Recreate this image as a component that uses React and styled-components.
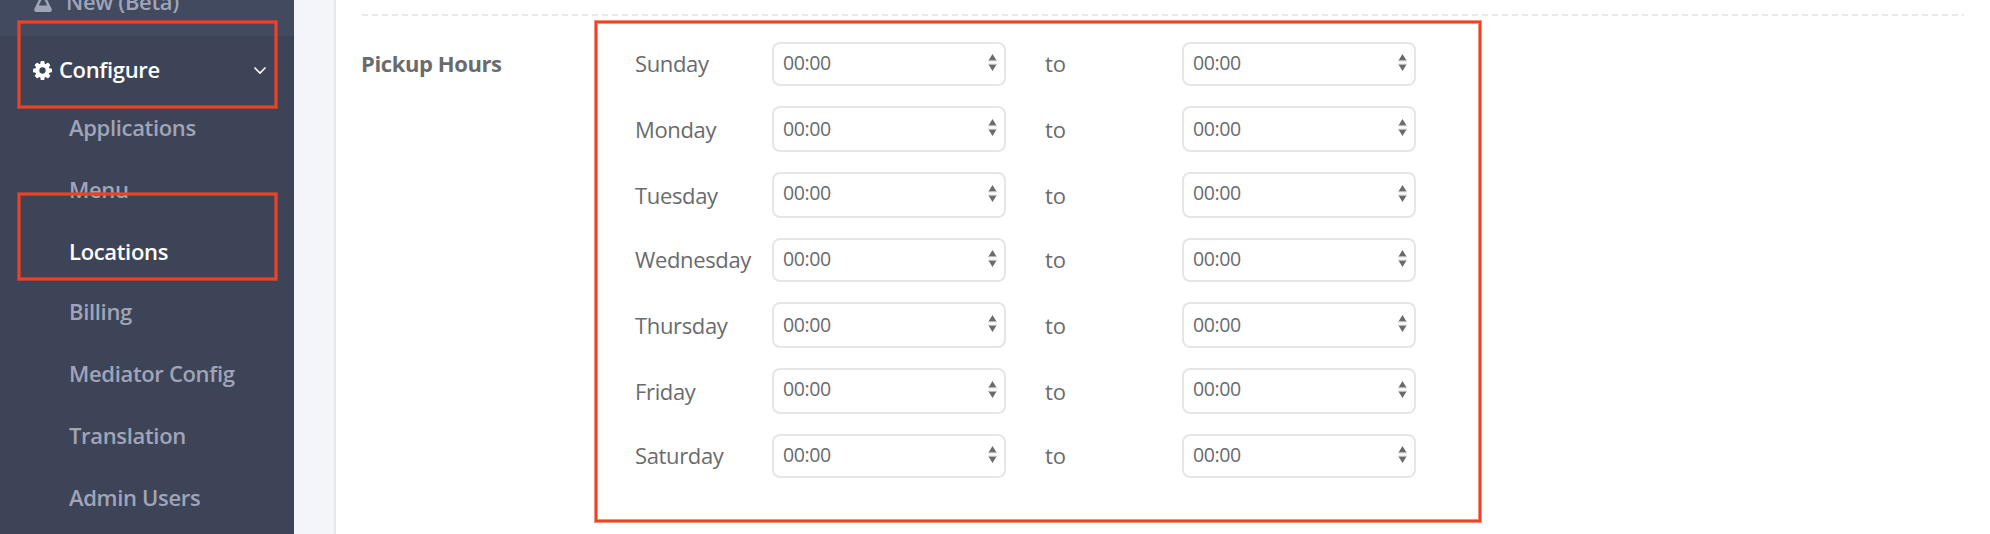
import styled, { createGlobalStyle } from "styled-components";

const subItems = [
  { label: "Applications", height: 62 },
  { label: "Menu", height: 62 },
  { label: "Locations", height: 60, active: true },
  { label: "Billing", height: 62 },
  { label: "Mediator Config", height: 62 },
  { label: "Translation", height: 62 },
  { label: "Admin Users", height: 62 },
];

const days = [
  { name: "Sunday", height: 44, textTop: 0, arrowTop: 0 },
  { name: "Monday", height: 46, textTop: 2, arrowTop: 1 },
  { name: "Tuesday", height: 46, textTop: 0, arrowTop: 1 },
  { name: "Wednesday", height: 44, textTop: 0, arrowTop: 0 },
  { name: "Thursday", height: 46, textTop: 2, arrowTop: 1 },
  { name: "Friday", height: 46, textTop: 0, arrowTop: 1 },
  { name: "Saturday", height: 44, textTop: 0, arrowTop: 0 },
];

function FlaskIcon() {
  return (
    <svg width="18" height="22" viewBox="0 0 18 22">
      <path
        fillRule="evenodd"
        fill="currentColor"
        d="M4.500 0h9v2h-1v6.500L17.500 18.500Q18.600 22 16 22H2Q-.6 22 .5 18.500L5.500 8.500V2h-1zM7.700 2v7.500L4.800 15.500h8.400L10.300 9.500V2z"
      />
    </svg>
  );
}

function CogIcon() {
  return (
    <svg width="19" height="19" viewBox="0 128 1536 1536">
      <path
        fill="currentColor"
        fillRule="evenodd"
        d="M1024 896a256 256 0 1 0-512 0a256 256 0 1 0 512 0zM1536 787v222q0 12-8 23t-20 13l-185 28q-19 54-39 91 35 50 107 138 10 12 10 25t-9 23q-27 37-99 108t-94 71q-12 0-26-9l-138-108q-44 23-91 38-16 136-29 186-7 28-36 28h-222q-14 0-24.500-8.500t-11.500-21.500l-28-184q-49-16-90-37l-141 107q-10 9-25 9-14 0-25-11-126-114-165-168-7-10-7-23 0-12 8-23 15-21 51-66.500t54-70.500q-27-50-41-99l-183-27q-13-2-21-12.500t-8-23.500v-222q0-12 8-23t19-13l186-28q14-46 39-92-40-57-107-138-10-12-10-24 0-10 9-23 26-36 98.500-107.500t94.500-71.500q13 0 26 10l138 107q44-23 91-38 16-136 29-186 7-28 36-28h222q14 0 24.500 8.500t11.500 21.500l28 184q49 16 90 37l142-107q9-9 24-9 13 0 25 10 129 119 165 170 7 8 7 22 0 12-8 23-15 21-51 66.500t-54 70.500q26 50 41 98l183 28q13 2 21 12.500t8 23.500z"
      />
    </svg>
  );
}

function TimeSelect({ day }) {
  return (
    <Select $height={day.height}>
      <Time $top={day.textTop}>00:00</Time>
      <Arrows $top={day.arrowTop} width="9" height="18" viewBox="0 0 9 18">
        <path fill="#696b6d" d="M4.500 0L8.500 6.500H.5zM.5 10.500h8L4.500 17z" />
        <path fill="#bdbebf" d="M0 6.500h9v.7H0zM0 9.800h9v.7H0z" />
      </Arrows>
    </Select>
  );
}

export default function App() {
  return (
    <>
      <GlobalStyle />
      <Page>
        <Sidebar>
          <TopItem>
            <FlaskIcon />
            <span>New (Beta)</span>
          </TopItem>
          <OpenGroup>
            <GroupHeader>
              <CogIcon />
              <GroupName>Configure</GroupName>
              <svg width="14" height="9" viewBox="0 0 14 9">
                <path d="M1.500 1.500L7 7l5.500-5.500" fill="none" stroke="#fff" strokeWidth="1.600" />
              </svg>
            </GroupHeader>
            {subItems.map((item) => (
              <SubItem key={item.label} $height={item.height} $active={item.active}>
                {item.label}
              </SubItem>
            ))}
          </OpenGroup>
        </Sidebar>
        <Content>
          <Divider />
          <FormRow>
            <FieldName>Pickup Hours</FieldName>
            <Days>
              {days.map((day) => (
                <DayRow key={day.name}>
                  <DayName>{day.name}</DayName>
                  <TimeSelect day={day} />
                  <To>to</To>
                  <TimeSelect day={day} />
                </DayRow>
              ))}
            </Days>
          </FormRow>
        </Content>
        <Highlight $left={17} $top={20} $width={261} $height={89} />
        <Highlight $left={17} $top={192} $width={261} $height={89} />
        <Highlight $left={594} $top={20} $width={888} $height={503} />
      </Page>
    </>
  );
}

const GlobalStyle = createGlobalStyle`
  * {
    box-sizing: border-box;
  }

  body {
    margin: 0;
    font-family: "Open Sans", sans-serif;
    -webkit-font-smoothing: antialiased;
  }
`;

const Page = styled.div`
  position: relative;
  display: flex;
  width: 1990px;
  height: 534px;
  overflow: hidden;
  background: #f4f5fa;
`;

const Sidebar = styled.nav`
  flex: none;
  width: 294px;
  background: #414a5e;
  color: #a0a4b8;
  font-size: 22px;
  font-weight: 600;
  letter-spacing: -0.33px;
`;

const TopItem = styled.div`
  display: flex;
  align-items: flex-end;
  gap: 14px;
  height: 36px;
  padding: 0 0 24px 34px;
  line-height: 30px;

  span {
    margin-bottom: -4px;
  }
`;

const OpenGroup = styled.div`
  height: 498px;
  background: #3d4457;
`;

const GroupHeader = styled.div`
  display: flex;
  align-items: center;
  height: 60px;
  padding: 6px 27px 0 33px;
  color: #fff;

  svg {
    margin-top: 3px;
  }
`;

const GroupName = styled.span`
  flex: 1;
  padding-left: 7px;
  line-height: 30px;
`;

const SubItem = styled.div`
  height: ${({ $height }) => $height}px;
  padding-left: 69px;
  color: ${({ $active }) => ($active ? "#fff" : "inherit")};
  line-height: 62px;
`;

const Content = styled.main`
  flex: 1;
  margin-left: 40px;
  padding: 14px 26px 0;
  border-left: 2px solid #e7e8ea;
  background: #fff;
  color: #696b6d;
`;

const Divider = styled.div`
  height: 2px;
  background: repeating-linear-gradient(90deg, #e9e9e9 0 6px, transparent 6px 10px);
`;

const FormRow = styled.div`
  display: flex;
  padding-top: 26px;
`;

const FieldName = styled.div`
  width: 274px;
  margin-left: -1px;
  padding-top: 6px;
  font-size: 22px;
  font-weight: 700;
  line-height: 30px;
  letter-spacing: -0.4px;
`;

const Days = styled.div`
  display: flex;
  flex-direction: column;
  gap: 20px;
`;

const DayRow = styled.div`
  display: flex;
  align-items: flex-end;
  font-size: 22px;
  line-height: 30px;
`;

const DayName = styled.div`
  width: 137px;
  padding-bottom: 8px;
  letter-spacing: -0.35px;
`;

const To = styled.div`
  width: 176px;
  padding: 0 0 8px 39px;
`;

const Select = styled.div`
  display: flex;
  justify-content: space-between;
  width: 234px;
  height: ${({ $height }) => $height}px;
  padding: 0 7px 0 9px;
  border: 2px solid #e5e6e7;
  border-radius: 8px;
`;

const Time = styled.span`
  padding-top: ${({ $top }) => $top + 5}px;
  font-size: 19.5px;
  line-height: 28px;
  letter-spacing: -0.4px;
`;

const Arrows = styled.svg`
  margin-top: ${({ $top }) => $top + 9.5}px;
`;

const Highlight = styled.div`
  position: absolute;
  left: ${({ $left }) => $left}px;
  top: ${({ $top }) => $top}px;
  width: ${({ $width }) => $width}px;
  height: ${({ $height }) => $height}px;
  border: 1px solid rgba(240, 66, 36, 0.6);
  box-shadow: inset 0 0 0 2px #ef4224, inset 0 0 0 3px rgba(240, 66, 36, 0.6);
`;
